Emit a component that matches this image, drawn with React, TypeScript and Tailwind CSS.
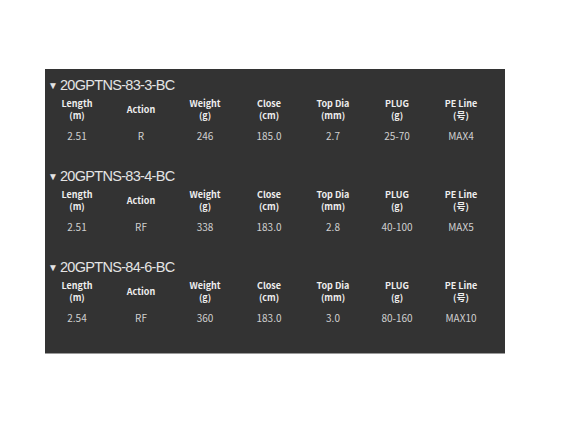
import React from 'react'

interface Spec {
  label: string
  unit?: string
}

interface Rod {
  name: string
  values: string[]
}

const specs: Spec[] = [
  { label: 'Length', unit: '(m)' },
  { label: 'Action' },
  { label: 'Weight', unit: '(g)' },
  { label: 'Close', unit: '(cm)' },
  { label: 'Top Dia', unit: '(mm)' },
  { label: 'PLUG', unit: '(g)' },
  { label: 'PE Line', unit: '(号)' },
]

const rods: Rod[] = [
  { name: '20GPTNS-83-3-BC', values: ['2.51', 'R', '246', '185.0', '2.7', '25-70', 'MAX4'] },
  { name: '20GPTNS-83-4-BC', values: ['2.51', 'RF', '338', '183.0', '2.8', '40-100', 'MAX5'] },
  { name: '20GPTNS-84-6-BC', values: ['2.54', 'RF', '360', '183.0', '3.0', '80-160', 'MAX10'] },
]

const jp = "font-['Noto_Sans_CJK_JP','Noto_Sans',sans-serif]"

const RodBlock: React.FC<{ rod: Rod }> = ({ rod }) => (
  <div className="pt-[6px] pb-[18px]">
    {/* Title */}
    <div className="flex items-center h-[20px] pl-[3px] font-['Liberation_Sans',Arial,sans-serif] text-[#e4e4e4]">
      <span className="text-[10px] w-[12px] leading-none pt-[1px]">▼</span>
      <span className="text-[14.5px] tracking-[-0.7px] leading-[20px]">{rod.name}</span>
    </div>

    {/* Header */}
    <div className={`grid grid-cols-[repeat(7,64px)] mt-[3px] h-[24px] ${jp} text-[9px] font-bold text-[#eeeeee]`}>
      {specs.map((s) => (
        <div key={s.label} className="flex flex-col items-center justify-center leading-[12px]">
          <span>{s.label}</span>
          {s.unit && <span>{s.unit}</span>}
        </div>
      ))}
    </div>

    {/* Values */}
    <div className={`grid grid-cols-[repeat(7,64px)] mt-[8px] h-[12px] ${jp} text-[10px] text-[#d0d0d0]`}>
      {rod.values.map((v, i) => (
        <div key={i} className="text-center leading-[12px]">{v}</div>
      ))}
    </div>
  </div>
)

export default function App() {
  return (
    <div className="w-[564px] h-[426px] bg-white pt-[69px] pl-[45px]">
      <div className="w-[460px] h-[285px] bg-[#333333] border-b border-[#9a9a9a]">
        {rods.map((rod) => (
          <RodBlock key={rod.name} rod={rod} />
        ))}
      </div>
    </div>
  )
}
